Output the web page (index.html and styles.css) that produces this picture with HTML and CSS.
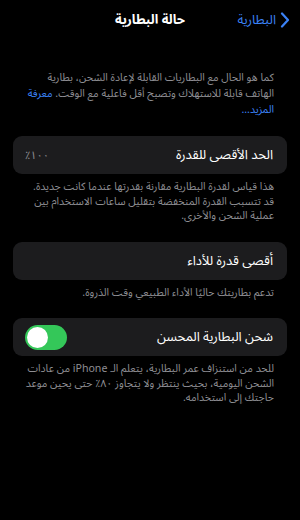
FILE: index.html
```html
<!DOCTYPE html>
<html lang="ar" dir="rtl">
<head>
<meta charset="utf-8">
<link rel="stylesheet" href="styles.css">
</head>
<body>
<div class="screen">
  <header class="nav">
    <a class="back">
      <svg class="chev" width="10" height="16" viewBox="0 0 10 16"><path d="M2 1.5 L8 8 L2 14.5" fill="none" stroke="#3b82f6" stroke-width="2.2" stroke-linecap="round" stroke-linejoin="round"/></svg>
      <span>البطارية</span>
    </a>
    <h1 class="title">حالة البطارية</h1>
    <span></span>
  </header>

  <p class="intro">كما هو الحال مع البطاريات القابلة لإعادة الشحن، بطارية الهاتف قابلة للاستهلاك وتصبح أقل فاعلية مع الوقت. <a class="more">معرفة المزيد...</a></p>

  <section class="card">
    <span class="label">الحد الأقصى للقدرة</span>
    <span class="value">١٠٠٪</span>
  </section>
  <p class="note">هذا قياس لقدرة البطارية مقارنة بقدرتها عندما كانت جديدة. قد تتسبب القدرة المنخفضة بتقليل ساعات الاستخدام بين عملية الشحن والأخرى.</p>

  <section class="card">
    <span class="label">أقصى قدرة للأداء</span>
  </section>
  <p class="note">تدعم بطاريتك حاليًا الأداء الطبيعي وقت الذروة.</p>

  <section class="card">
    <span class="label">شحن البطارية المحسن</span>
    <span class="toggle"><span class="knob"></span></span>
  </section>
  <p class="note">للحد من استنزاف عمر البطارية، يتعلم الـ iPhone من عادات الشحن اليومية، بحيث ينتظر ولا يتجاوز ٨٠٪ حتى يحين موعد حاجتك إلى استخدامه.</p>
</div>
</body>
</html>
```
FILE: styles.css
```css
html, body {
  margin: 0;
  padding: 0;
  background: #000;
}
body {
  font-family: "Noto Sans Arabic", "Noto Naskh Arabic", "DejaVu Sans", "Noto Sans", sans-serif;
  color: #fff;
  width: 300px;
  height: 520px;
  overflow: hidden;
}
.screen {
  display: flex;
  flex-direction: column;
}
.nav {
  display: grid;
  grid-template-columns: 1fr auto 1fr;
  align-items: center;
  height: 40px;
  padding: 0 10px;
}
.back {
  display: flex;
  align-items: center;
  gap: 4px;
  color: #3b82f6;
  font-size: 13px;
}
.title {
  margin: 0;
  font-size: 13px;
  font-weight: bold;
  color: #fff;
  text-align: center;
}
.intro {
  margin: 30px 0 0;
  padding: 0 26px 0 24px;
  font-size: 10.6px;
  line-height: 16px;
  color: #8e8e93;
}
.more {
  color: #3b82f6;
}
.card {
  margin: 18px 13px 0;
  height: 38px;
  border-radius: 9px;
  background: #1c1c1e;
  display: flex;
  align-items: center;
  justify-content: space-between;
  padding: 0 14px 0 12px;
}
.label {
  font-size: 13px;
  color: #fff;
}
.value {
  font-size: 11px;
  color: #8e8e93;
}
.note {
  margin: 6px 0 0;
  padding: 0 26px 0 24px;
  font-size: 10.6px;
  line-height: 14.5px;
  color: #8e8e93;
}
.toggle {
  width: 42px;
  height: 25px;
  border-radius: 13px;
  background: #34c759;
  display: flex;
  align-items: center;
  justify-content: flex-end;
  padding: 0 2px;
  box-sizing: border-box;
}
.knob {
  width: 21px;
  height: 21px;
  border-radius: 50%;
  background: #fff;
}
```
